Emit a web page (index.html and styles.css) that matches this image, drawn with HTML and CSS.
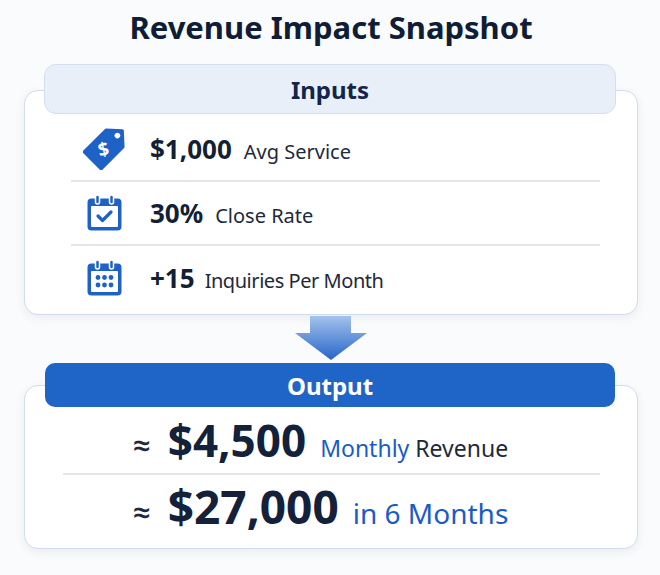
FILE: index.html
```html
<!DOCTYPE html>
<html lang="en">
<head>
<meta charset="utf-8">
<title>Revenue Impact Snapshot</title>
<link rel="stylesheet" href="styles.css">
</head>
<body>
<div class="page">
  <h1 class="title">Revenue Impact Snapshot</h1>

  <section class="card inputs">
    <div class="card-head head-light">Inputs</div>
    <ul class="rows">
      <li class="row">
        <span class="icon">
          <svg width="42" height="42" viewBox="0 0 42 42" aria-hidden="true">
            <g transform="translate(24.5 17.5) rotate(-45)">
              <polygon points="-21,-12 10,-12 21,0 10,12 -21,12" fill="#1f62c6" stroke="#1f62c6" stroke-width="3" stroke-linejoin="round"/>
              <circle cx="14" cy="0" r="2.8" fill="#fff"/>
            </g>
            <text x="20.5" y="28" class="tag-dollar" transform="rotate(-12 20.5 22)">$</text>
          </svg>
        </span>
        <span class="txt"><strong class="num">$1,000</strong><span class="label">Avg Service</span></span>
      </li>
      <li class="row">
        <span class="icon">
          <svg width="37" height="38" viewBox="0 0 37 38" aria-hidden="true">
            <rect x="1.5" y="4.5" width="34" height="32" rx="4" fill="#1f62c6"/>
            <rect x="5" y="12" width="27" height="21" rx="1" fill="#fff"/>
            <rect x="9.5" y="1" width="4" height="9" rx="2" fill="#1f62c6" stroke="#fff" stroke-width="1.5"/>
            <rect x="23.5" y="1" width="4" height="9" rx="2" fill="#1f62c6" stroke="#fff" stroke-width="1.5"/>
            <polyline points="12,22 16.5,26.5 25,18" fill="none" stroke="#1f62c6" stroke-width="3.2" stroke-linecap="round" stroke-linejoin="round"/>
          </svg>
        </span>
        <span class="txt"><strong class="num">30%</strong><span class="label">Close Rate</span></span>
      </li>
      <li class="row">
        <span class="icon">
          <svg width="37" height="38" viewBox="0 0 37 38" aria-hidden="true">
            <rect x="1.5" y="4.5" width="34" height="32" rx="4" fill="#1f62c6"/>
            <rect x="5" y="12" width="27" height="21" rx="1" fill="#fff"/>
            <rect x="9.5" y="1" width="4" height="9" rx="2" fill="#1f62c6" stroke="#fff" stroke-width="1.5"/>
            <rect x="23.5" y="1" width="4" height="9" rx="2" fill="#1f62c6" stroke="#fff" stroke-width="1.5"/>
            <circle cx="12" cy="18.5" r="2.4" fill="#1f62c6"/>
            <circle cx="18.5" cy="18.5" r="2.4" fill="#1f62c6"/>
            <circle cx="25" cy="18.5" r="2.4" fill="#1f62c6"/>
            <circle cx="12" cy="26" r="2.4" fill="#1f62c6"/>
            <circle cx="18.5" cy="26" r="2.4" fill="#1f62c6"/>
            <circle cx="25" cy="26" r="2.4" fill="#1f62c6"/>
          </svg>
        </span>
        <span class="txt"><strong class="num">+15</strong><span class="label narrow">Inquiries Per Month</span></span>
      </li>
    </ul>
  </section>

  <div class="arrow">
    <svg width="72" height="44" viewBox="0 0 72 44" aria-hidden="true">
      <defs>
        <linearGradient id="ag" x1="0" y1="0" x2="0" y2="1">
          <stop offset="0" stop-color="#a4c2ec"/>
          <stop offset="1" stop-color="#2766c8"/>
        </linearGradient>
      </defs>
      <polygon points="15,0 56,0 56,17 72,17 36,44 0,17 15,17" fill="url(#ag)"/>
    </svg>
  </div>

  <section class="card outputs">
    <div class="card-head head-blue">Output</div>
    <div class="out-row first">
      <span class="approx">≈</span><strong class="big">$4,500</strong><span class="out-label"><span class="blue">Monthly</span> Revenue</span>
    </div>
    <div class="out-row second">
      <span class="approx">≈</span><strong class="big">$27,000</strong><span class="out-label blue">in 6 Months</span>
    </div>
  </section>
</div>
</body>
</html>
```

FILE: styles.css
```css
* { box-sizing: border-box; }

body {
  margin: 0;
  background: #fafbfc;
  font-family: "Noto Sans", "Open Sans", sans-serif;
  color: #15223a;
}

.page {
  width: 660px;
  height: 575px;
  padding: 0 22px 0 24px;
}

.title {
  margin: 0;
  padding-top: 7px;
  height: 45px;
  line-height: 40px;
  font-size: 31px;
  font-weight: 700;
  text-align: center;
  color: #0f1d36;
}

.card {
  background: #ffffff;
  border: 1px solid #d3dcea;
  border-radius: 14px;
  box-shadow: 0 3px 10px rgba(40, 70, 120, 0.08);
}

.inputs {
  margin-top: 45px;
  height: 225px;
}

.card-head {
  border-radius: 12px;
  text-align: center;
  font-weight: 700;
  font-size: 24px;
}

.head-light {
  margin: -27px 21px 0 19px;
  height: 50px;
  line-height: 50px;
  background: #e9eff8;
  border: 1px solid #d3deef;
  color: #13254a;
}

.rows {
  list-style: none;
  margin: 4px 37px 0 46px;
  padding: 0;
}

.row {
  display: flex;
  align-items: center;
  height: 64px;
  border-bottom: 2px solid #e5e6ea;
}

.row:last-child {
  border-bottom: none;
}

.icon {
  width: 42px;
  height: 42px;
  margin-left: 12px;
  margin-right: 25px;
  display: flex;
  align-items: center;
  justify-content: center;
}

.icon svg { display: block; }

.tag-dollar {
  fill: #ffffff;
  font-family: "Noto Sans", sans-serif;
  font-weight: 700;
  font-size: 19px;
  text-anchor: middle;
}

.txt {
  white-space: nowrap;
}

.num {
  font-size: 26px;
  font-weight: 700;
  color: #131f33;
}

.label {
  margin-left: 12px;
  font-size: 20px;
  color: #1e293c;
}

.label.narrow {
  margin-left: 10px;
  letter-spacing: -0.45px;
}

.arrow {
  height: 44px;
  margin-top: 1px;
  display: flex;
  justify-content: center;
}

.arrow svg { display: block; }

.outputs {
  margin-top: 25px;
  height: 164px;
}

.head-blue {
  margin: -23px 22px 0 20px;
  height: 44px;
  line-height: 46px;
  background: #1f65c8;
  color: #ffffff;
  border-radius: 10px;
}

.out-row {
  margin: 0 37px 0 38px;
  padding-left: 70px;
  white-space: nowrap;
  color: #16233a;
}

.out-row > span,
.out-row > strong {
  line-height: 1;
}

.out-row.first {
  height: 68px;
  line-height: 66px;
  font-size: 44px;
  border-bottom: 2px solid #e5e6ea;
}

.out-row.second {
  height: 73px;
  line-height: 62px;
  font-size: 46px;
}

.approx {
  font-size: 31px;
  font-weight: 600;
  margin-right: 17px;
  color: #1c2940;
}

.big {
  font-weight: 700;
  color: #14213a;
}

.first .big { font-size: 44px; }
.second .big { font-size: 46px; }

.out-label {
  margin-left: 14px;
  color: #1e293c;
}

.first .out-label { font-size: 23px; }
.second .out-label { font-size: 28px; }

.blue { color: #1a5cc4; }
```
